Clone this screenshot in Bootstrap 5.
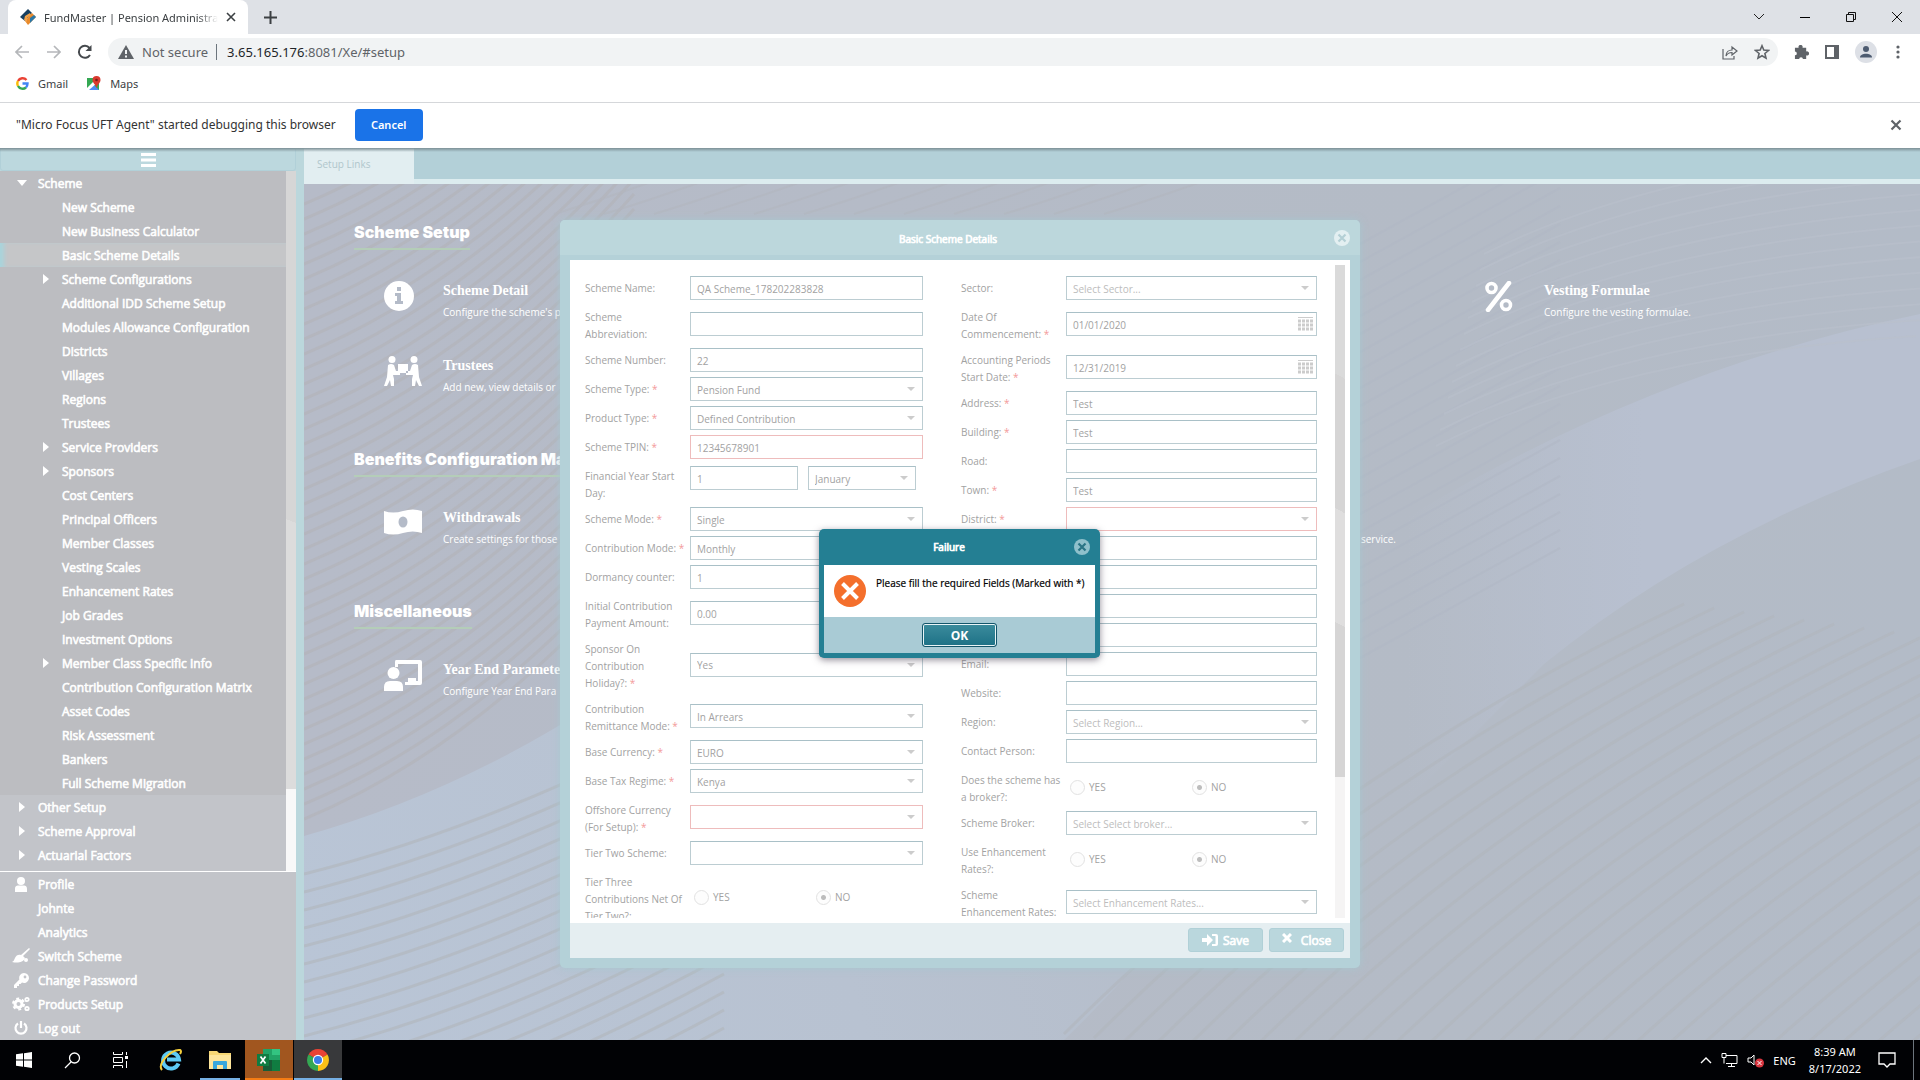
<!DOCTYPE html>
<html lang="en">
<head>
<meta charset="utf-8">
<meta name="viewport" content="width=device-width, initial-scale=1">
<title>FundMaster | Pension Administration</title>
<link href="https://cdn.jsdelivr.net/npm/bootstrap@5.3.0/dist/css/bootstrap.min.css" rel="stylesheet">
<style>
  body { font-family: "Open Sans", "Noto Sans", sans-serif; font-size: 10px; line-height: 17px; }
  button { border: 0; background: none; padding: 0; color: inherit; }
  svg { display: block; flex: none; }
  .chrome-ui { font-family: "Noto Sans", "Open Sans", sans-serif; color: #3c4043; }

  /* browser */
  .tabstrip { height: 34px; background: #dee1e6; padding-left: 8px; }
  .browser-tab { width: 240px; height: 34px; background: #fff; border-radius: 8px 8px 0 0; padding: 0 10px 0 12px; font-size: 11px; gap: 8px; }
  .tab-title { width: 174px; overflow: hidden; white-space: nowrap; -webkit-mask-image: linear-gradient(90deg, #000 88%, transparent); }
  .win-buttons { gap: 30px; padding-right: 17px; }
  .toolbar-row { height: 36px; padding: 4px 13px 4px 15px; }
  .nav-icons { gap: 16px; width: 93px; }
  .address-pill { height: 28px; border-radius: 14px; background: #f1f3f4; font-size: 13px; color: #5f6368; padding: 0 8px 0 10px; }
  .host { margin-left: 10px; }
  .bookmarks { height: 33px; padding: 0 16px 6px; font-size: 11px; border-bottom: 1px solid #d5d7da; gap: 18px; }
  .bookmarks a { color: #3c4043; text-decoration: none; gap: 9px; }
  .infobar { height: 45px; padding: 0 18px 2px 16px; font-size: 12px; color: #333; }
  .cancel-btn { width: 68px; height: 32px; background: #1a73e8; color: #fff; border-radius: 4px; font-weight: 600; font-size: 11px; margin-left: 19px; }

  /* application */
  .app-area { overflow: hidden; background: #bbd7dc; min-height: 0; }
  .app-area::before { content: ""; position: absolute; left: 0; right: 0; top: 0; height: 4px; background: linear-gradient(#7d9096, rgba(150,175,182,0)); z-index: 3; }
  .side { width: 304px; border-right: 8px solid #bbd7dc; color: #fff; }
  .burger { height: 23px; background: #bcd8de; border: 1px solid #b1d0d8; border-radius: 0 0 3px 3px; }
  .tree-wrap { background: #bcbdc1; min-height: 0; border-bottom: 1px solid #fff; }
  .tree-pane { background: #c2c4c9; }
  .tree-pane .group-a { background: #bcbdc1; }
  .tree-scroll { width: 10px; background: linear-gradient(#f8f8f8, #f8f8f8) bottom / 100% 82px no-repeat, linear-gradient(20deg, #dcdcdc 50%, #d6d6d6 50%); }
  .tree-line { height: 24px; font-size: 12px; -webkit-text-stroke: 0.6px #fff; color: #fff; text-decoration: none; white-space: nowrap; display: flex; align-items: center; }
  .tree-line .slot { width: 26px; margin-left: 12px; display: flex; justify-content: center; }
  .sub { padding-left: 24px; }
  .chosen { background: #c5c6c8; box-shadow: inset 6px 0 4px -2px #a9d4dc; }
  .tri-r { border-left: 6px solid #fff; border-top: 5px solid transparent; border-bottom: 5px solid transparent; margin-right: 6px; }
  .tri-d { border-top: 6px solid #fff; border-left: 5px solid transparent; border-right: 5px solid transparent; margin-right: 6px; }
  .side-foot { background: #c2c4c9; }

  .app-tabs { height: 36px; background: #b3d0d8; border-bottom: 5px solid #dcecef; }
  .setup-tab { width: 110px; height: 36px; background: #e2eef1; color: #b0c6cc; font-size: 10px; padding: 0 13px; line-height: 32px; }
  .canvas-bg { background: #b4bbc8; overflow: hidden; min-height: 0; }
  .bg-art { position: absolute; inset: 0; width: 100%; height: 100%; }
  .links-body { position: relative; padding: 36px 98px 0 50px; color: #fff; }
  .sect-title { font-family: Inter, "Open Sans", sans-serif; font-weight: 900; font-size: 16px; line-height: 24px; border-bottom: 2px solid #b4cdb8; display: inline-block; padding-bottom: 4px; margin: 0 0 4px; white-space: nowrap; }
  .link-item { height: 75px; padding: 27px 0 0 30px; white-space: nowrap; }
  .link-item .ico { width: 59px; }
  .link-item h3 { font-family: "Liberation Serif", serif; font-weight: 700; font-size: 14px; line-height: 20px; margin: 0 0 3px; }
  .link-item p { font-size: 10px; line-height: 17px; margin: 0; }
  .link-tail { padding-right: 59px; }
  .sect { margin-bottom: 43px; }

  /* dialogs */
  .layer { position: absolute; inset: 0; display: flex; align-items: center; justify-content: center; z-index: 2; }
  .alert-layer { padding: 0 1px 1px 0; }
  .scheme-win { width: 800px; height: 748px; background: #b4d1d8; border-radius: 5px; box-shadow: 0 0 8px rgba(165,200,208,.9); padding: 0 10px 10px; }
  .win-head { height: 41px; margin: 0 -10px; padding: 0 10px; background: #bcd7dc; border-bottom: 5px solid #b4d1d8; border-radius: 5px 5px 0 0; color: #fff; }
  .win-title { font-size: 10px; font-weight: 400; -webkit-text-stroke: 0.7px #fff; margin: 0; line-height: 17px; }
  .form-area { background: #fff; padding: 5px; min-height: 0; }
  .form-clip { overflow: hidden; padding: 11px 18px 0 10px; gap: 38px; }
  .bar-track { width: 10px; background: #f5f4f4; }
  .bar-thumb { height: 512px; background: linear-gradient(28deg, #d6d5d5 0 30%, #dfdede 30% 52%, #d6d5d5 52% 78%, #dadada 78%); }
  .col-a { width: 338px; } .col-b { width: 356px; }
  .frow { display: flex; align-items: center; margin-bottom: 5px; color: #a2a2a2; }
  .flabel { width: 105px; min-height: 21px; padding-top: 4px; align-self: flex-start; white-space: nowrap; flex: none; }
  .flabel i { color: #f39a9a; font-style: normal; }
  .fin { flex: 1; min-width: 0; height: 24px; border: 1px solid #bccdd2; border-top-color: #a9c0c7; border-radius: 0; background-color: #fff; color: #a2a2a2; padding: 2px 6px 0; font-size: 10px; outline: 0; }
  select.fin { appearance: none; background-image: url("data:image/svg+xml,%3Csvg xmlns='http://www.w3.org/2000/svg' width='8' height='4'%3E%3Cpath d='M0 0h8l-4 4z' fill='%23ccc'/%3E%3C/svg%3E"); background-repeat: no-repeat; background-position: right 7px top 9px; }
  .hint { color: #bdbdbd !important; }
  .bad { border-color: #eebcbc; }
  .cal-wrap { flex: 1; display: flex; position: relative; }
  .cal-wrap svg { position: absolute; right: 4px; top: 5px; }
  .fyear { gap: 10px; flex: 1; padding-right: 7px; align-self: flex-start; padding-top: 2px; }
  .radios label { width: 122px; padding-left: 4px; gap: 4px; display: flex; align-items: center; }
  .radios input { appearance: none; width: 15px; height: 15px; border-radius: 50%; border: 1px solid #e2e2e2; background: #fdfdfd; margin: 0; }
  .radios input:checked { background: radial-gradient(circle, #bdbdbd 2px, #fdfdfd 3px); }
  .win-foot { height: 36px; background: #e5eef1; padding-right: 6px; gap: 6px; }
  .soft-btn { width: 75px; height: 24px; background: #bad7dd; border: 1px solid #b0d0d7; border-radius: 3px; color: #fff; font-size: 12px; -webkit-text-stroke: 0.7px #fff; gap: 5px; display: flex; align-items: center; justify-content: center; }
  .fail-win { width: 281px; border: 5px solid #247f93; border-top: 0; border-radius: 5px; background: #fff; box-shadow: 0 2px 7px rgba(60,50,70,.55); }
  .fail-head { height: 36px; background: #247f93; color: #fff; padding-right: 5px; }
  .fail-text { height: 52px; color: #000; padding: 10px 0 0 10px; gap: 10px; white-space: nowrap; -webkit-text-stroke: 0.2px #000; }
  .fail-foot { height: 36px; background: #a9cbd5; }
  .ok-btn { width: 75px; height: 24px; border: 1px solid #13566b; box-shadow: inset 0 0 0 1px #e9f4f6; border-radius: 3px; background: linear-gradient(#3c8c9d, #1d7186); color: #fff; font-size: 12px; font-weight: 700; }

  /* taskbar */
  .taskbar { height: 40px; background: #010205; color: #fff; }
  .task { width: 48px; height: 40px; display: flex; align-items: center; justify-content: center; }
  .pinned { gap: 1px; margin-left: 3px; }
  .running { background: linear-gradient(#76b0e4, #76b0e4) bottom / 40px 2px no-repeat; }
  .attention { background: #a1561f; box-shadow: inset 0 -2px #f57c14; }
  .current { background: #38393b; box-shadow: inset 0 -2px #76b0e4; }
  .tray { gap: 9px; padding-right: 6px; font-size: 11px; }
  .rule-v { width: 1px; height: 40px; background: #6c757d; }
</style>
</head>
<body class="vh-100 d-flex flex-column overflow-hidden">

<header class="chrome-ui bg-white">
  <div class="tabstrip d-flex align-items-center">
    <div class="browser-tab d-flex align-items-center">
      <svg width="16" height="16" viewBox="0 0 16 16"><path d="M8 0l4 4-7 8-5-4z" fill="#163f5f"/><path d="M12 4l4 4-8 8-3-4z" fill="#e98a2b"/><path d="M5 7l5-3 1 2-4 3v4L4 11z" fill="#f0a24a"/><path d="M10 9l4-3 2 2-6 6z" fill="#2b78a8"/></svg>
      <span class="tab-title">FundMaster | Pension Administra</span>
      <button aria-label="Close tab"><svg width="10" height="10" stroke="#3c4043" stroke-width="1.6"><path d="M1 1l8 8M9 1l-8 8"/></svg></button>
    </div>
    <button class="ms-3" aria-label="New tab"><svg width="13" height="13" stroke="#3c4043" stroke-width="2"><path d="M6.500 0v13M0 6.500h13"/></svg></button>
    <div class="win-buttons d-flex align-items-center ms-auto">
      <button aria-label="Search tabs"><svg width="12" height="8" fill="none" stroke="#222"><path d="M1 1l5 5 5-5"/></svg></button>
      <button aria-label="Minimize" class="ps-1"><svg width="12" height="10"><path d="M1 5h10v1H1z"/></svg></button>
      <button aria-label="Restore" class="ps-1"><svg width="12" height="12" fill="none" stroke="#111"><path d="M1.500 3.500h7v7h-7zM3.500 3.500v-2h7v7h-2"/></svg></button>
      <button aria-label="Close" class="ps-1"><svg width="12" height="12" stroke="#111"><path d="M1 1l10 10M11 1L1 11"/></svg></button>
    </div>
  </div>
  <div class="toolbar-row d-flex align-items-center">
    <div class="nav-icons d-flex align-items-center">
      <svg width="15" height="14" fill="none" stroke="#b5b7ba" stroke-width="1.7"><path d="M14 7H1M7 1L1 7l6 6"/></svg>
      <svg width="15" height="14" fill="none" stroke="#b5b7ba" stroke-width="1.7"><path d="M1 7h13M8 1l6 6-6 6"/></svg>
      <svg width="16" height="16" fill="none" stroke="#45494d" stroke-width="2"><path d="M13 11A6 6 0 1 1 12.500 4"/><path d="M14.500 1v6h-6z" fill="#45494d" stroke="none"/></svg>
    </div>
    <div class="address-pill flex-grow-1 d-flex align-items-center">
      <svg width="16" height="14"><path d="M8 0l8 14H0z" fill="#5f6368"/><path d="M7 5h2v4H7zM7 10.500h2v2H7z" fill="#f1f3f4"/></svg>
      <span class="ms-2">Not secure</span>
      <span class="ms-2 border-start border-secondary py-2"></span>
      <span class="host flex-grow-1"><span class="text-dark">3.65.165.176</span>:8081/Xe/#setup</span>
      <svg width="16" height="15" fill="none" stroke="#5f6368" stroke-width="1.200"><path d="M1 4v10h11v-3M4 11c0-4 3-6 6-6V2l5 4-5 4V7.500C7 7.500 5 9 4 11z"/></svg>
      <svg class="ms-3" width="16" height="16" viewBox="0 0 16 16" fill="none" stroke="#5f6368" stroke-width="1.600"><path d="M8 1.800l1.800 4.300 4.700.4-3.600 3 1.100 4.600L8 11.700l-4 2.400 1.100-4.600-3.600-3 4.700-.4z"/></svg>
    </div>
    <div class="d-flex align-items-center ms-3">
      <svg width="15" height="15" viewBox="0 0 16 16" fill="#5f6368"><path d="M1 3h4a2.200 2.200 0 1 1 4 0h4v4a2.200 2.200 0 1 1 0 4v4H9.500a2 2 0 0 0-4 0H1v-4a2 2 0 0 0 0-4z"/></svg>
      <svg class="ms-3" width="14" height="14"><path d="M1 1h12v12H1z" fill="none" stroke="#5f6368" stroke-width="2"/><path d="M9 0h5v14H9z" fill="#5f6368"/></svg>
      <svg class="ms-3" width="22" height="22"><circle cx="11" cy="11" r="11" fill="#dde0e6"/><circle cx="11" cy="8" r="3" fill="#4d5b70"/><path d="M5 16.500c0-5 12-5 12 0z" fill="#4d5b70"/></svg>
      <svg class="ms-3 me-1" width="10" height="14" fill="#5f6368"><circle cx="5" cy="2" r="1.600"/><circle cx="5" cy="7" r="1.600"/><circle cx="5" cy="12" r="1.600"/></svg>
    </div>
  </div>
  <nav class="bookmarks d-flex align-items-center">
    <a href="#" class="d-flex align-items-center"><svg width="13" height="13" viewBox="0 0 13 13" fill="none" stroke-width="2.400"><path d="M2 4a5.200 5.200 0 0 1 8.500-1" stroke="#ea4335"/><path d="M2 4a5.200 5.200 0 0 0 0 5" stroke="#fbbc05"/><path d="M2 9a5.200 5.200 0 0 0 8 1.500" stroke="#34a853"/><path d="M6.500 6.500h5c0 1.800-.5 3-1.500 4" stroke="#4285f4"/></svg>Gmail</a>
    <a href="#" class="d-flex align-items-center"><svg width="15" height="14"><path d="M1 2h12v12H1z" fill="#34a853"/><path d="M1 14l6-6 6 6z" fill="#4e8cf5"/><path d="M1 12L9 4l2 3-8 7H1z" fill="#fff"/><path d="M10.500 0a4 4 0 0 1 4 4c0 3-3 4-4 8-1-4-4-5-4-8a4 4 0 0 1 4-4z" fill="#d93a2f"/><circle cx="10.500" cy="4" r="1.300" fill="#7a1e18"/></svg>Maps</a>
  </nav>
  <div class="infobar d-flex align-items-center">
    <span>"Micro Focus UFT Agent" started debugging this browser</span>
    <button class="cancel-btn">Cancel</button>
    <button class="ms-auto" aria-label="Dismiss"><svg width="12" height="12" stroke="#5f6368" stroke-width="2.200"><path d="M1.500 1.500l9 9M10.500 1.500l-9 9"/></svg></button>
  </div>
</header>

<div class="app-area position-relative flex-grow-1 d-flex">
  <aside class="side d-flex flex-column flex-shrink-0">
    <button class="burger d-flex justify-content-center align-items-center" aria-label="Toggle menu"><svg width="15" height="14" fill="#fff"><path d="M0 0h15v3H0zM0 5.500h15v3H0zM0 11h15v3H0z"/></svg></button>
    <div class="tree-wrap d-flex flex-grow-1">
      <nav class="tree-pane flex-grow-1">
        <div class="group-a">
          <a href="#" class="tree-line"><span class="slot"><span class="tri-d"></span></span>Scheme</a>
          <div class="sub">
            <a href="#" class="tree-line"><span class="slot"></span>New Scheme</a>
            <a href="#" class="tree-line"><span class="slot"></span>New Business Calculator</a>
          </div>
          <div class="sub chosen"><a href="#" class="tree-line"><span class="slot"></span>Basic Scheme Details</a></div>
          <div class="sub">
            <a href="#" class="tree-line"><span class="slot"><span class="tri-r"></span></span>Scheme Configurations</a>
            <a href="#" class="tree-line"><span class="slot"></span>Additional IDD Scheme Setup</a>
            <a href="#" class="tree-line"><span class="slot"></span>Modules Allowance Configuration</a>
            <a href="#" class="tree-line"><span class="slot"></span>Districts</a>
            <a href="#" class="tree-line"><span class="slot"></span>Villages</a>
            <a href="#" class="tree-line"><span class="slot"></span>Regions</a>
            <a href="#" class="tree-line"><span class="slot"></span>Trustees</a>
            <a href="#" class="tree-line"><span class="slot"><span class="tri-r"></span></span>Service Providers</a>
            <a href="#" class="tree-line"><span class="slot"><span class="tri-r"></span></span>Sponsors</a>
            <a href="#" class="tree-line"><span class="slot"></span>Cost Centers</a>
            <a href="#" class="tree-line"><span class="slot"></span>Principal Officers</a>
            <a href="#" class="tree-line"><span class="slot"></span>Member Classes</a>
            <a href="#" class="tree-line"><span class="slot"></span>Vesting Scales</a>
            <a href="#" class="tree-line"><span class="slot"></span>Enhancement Rates</a>
            <a href="#" class="tree-line"><span class="slot"></span>Job Grades</a>
            <a href="#" class="tree-line"><span class="slot"></span>Investment Options</a>
            <a href="#" class="tree-line"><span class="slot"><span class="tri-r"></span></span>Member Class Specific Info</a>
            <a href="#" class="tree-line"><span class="slot"></span>Contribution Configuration Matrix</a>
            <a href="#" class="tree-line"><span class="slot"></span>Asset Codes</a>
            <a href="#" class="tree-line"><span class="slot"></span>Risk Assessment</a>
            <a href="#" class="tree-line"><span class="slot"></span>Bankers</a>
            <a href="#" class="tree-line"><span class="slot"></span>Full Scheme Migration</a>
          </div>
        </div>
        <a href="#" class="tree-line"><span class="slot"><span class="tri-r"></span></span>Other Setup</a>
        <a href="#" class="tree-line"><span class="slot"><span class="tri-r"></span></span>Scheme Approval</a>
        <a href="#" class="tree-line"><span class="slot"><span class="tri-r"></span></span>Actuarial Factors</a>
      </nav>
      <div class="tree-scroll"></div>
    </div>
    <nav class="side-foot">
      <a href="#" class="tree-line"><span class="slot pe-2"><svg width="14" height="15" fill="#fff"><circle cx="7" cy="4" r="4"/><path d="M1 15v-3c0-4 3-3.500 6-3.500s6-.5 6 3.500v3z"/></svg></span>Profile</a>
      <a href="#" class="tree-line"><span class="slot"></span>Johnte</a>
      <a href="#" class="tree-line"><span class="slot"></span>Analytics</a>
      <a href="#" class="tree-line"><span class="slot pe-2"><svg width="18" height="16" fill="#fff"><path d="M17 0l1 1-7 7 2 2c-2 5-8 5-13 4 2-1 2-2 3-4 1-3 4-4 6-3z"/><circle cx="14" cy="12" r="2"/></svg></span>Switch Scheme</a>
      <a href="#" class="tree-line"><span class="slot pe-2"><svg width="15" height="15"><path d="M10 0a5 5 0 1 1-2 9.600L6.500 11H5v2H3v2H0v-3l5.400-5.500A5 5 0 0 1 10 0z" fill="#fff"/><circle cx="11" cy="4" r="1.400" fill="#c2c4c9"/></svg></span>Change Password</a>
      <a href="#" class="tree-line"><span class="slot pe-2"><svg width="18" height="16" fill="none" stroke="#fff"><circle cx="6.500" cy="8" r="3.500" stroke-width="3"/><circle cx="6.500" cy="8" r="5.500" stroke-width="2" stroke-dasharray="2.900 2.860"/><circle cx="15" cy="3.500" r="1.700" stroke-width="1.800"/><circle cx="15" cy="12.500" r="1.700" stroke-width="1.800"/></svg></span>Products Setup</a>
      <a href="#" class="tree-line"><span class="slot pe-2"><svg width="14" height="14" fill="none" stroke="#fff" stroke-width="2.200"><path d="M4 2.500a5.500 5.500 0 1 0 6 0M7 0v7"/></svg></span>Log out</a>
    </nav>
  </aside>

  <main class="flex-grow-1 d-flex flex-column">
    <div class="app-tabs"><div class="setup-tab">Setup Links</div></div>
    <div class="canvas-bg position-relative flex-grow-1">
      <svg class="bg-art" viewBox="0 0 1616 856" preserveAspectRatio="none" fill="none">
        <defs>
          <linearGradient id="gA" x1="0" y1="0" x2="1" y2="0"><stop offset="0" stop-color="#b6bbc8"/><stop offset=".7" stop-color="#b4bbc6"/><stop offset="1" stop-color="#b3bbc7"/></linearGradient>
          <linearGradient id="gB" gradientUnits="userSpaceOnUse" x1="0" y1="800" x2="1000" y2="500"><stop offset="0" stop-color="#b9c5d6"/><stop offset=".5" stop-color="#b8c2d1"/><stop offset="1" stop-color="#b4bbc7"/></linearGradient>
          <linearGradient id="gC" gradientUnits="userSpaceOnUse" x1="1100" y1="0" x2="1340" y2="0"><stop offset="0" stop-color="#b8c0d0" stop-opacity="0"/><stop offset="1" stop-color="#b8c0d0"/></linearGradient>
        </defs>
        <path d="M0 0h1616v856H0z" fill="url(#gA)"/>
        <path d="M0 652Q150 610 290 520L800 200L1000 560Q900 720 760 856H0z" fill="url(#gB)"/>
        <path d="M1100 335Q1350 185 1616 130V275Q1400 350 1240 480L1100 620z" fill="url(#gC)"/>
        <g id="lines"></g>
      </svg>
      <div class="links-body">
        <section class="sect">
          <h2 class="sect-title">Scheme Setup</h2>
          <div class="row row-cols-4 g-0">
            <div>
              <div class="link-item d-flex"><div class="ico"><svg width="30" height="30"><circle cx="15" cy="15" r="15" fill="#fff"/><path d="M13 6h4v4h-4zM11 12h6v8h2v3h-8v-3h2v-5h-2z" fill="#b4bbc8"/></svg></div><div><h3>Scheme Detail</h3><p>Configure the scheme's p</p></div></div>
              <div class="link-item d-flex"><div class="ico"><svg width="38" height="31" fill="#fff"><circle cx="8" cy="3.500" r="3.500"/><circle cx="30" cy="3.500" r="3.500"/><path d="M14 8h10v9H14zM4 9q3-2 6 0l2 6h4v4H9l1 4v7H7l-1-6-3 6H0l3-9zM34 9q-3-2-6 0l-2 6h-4v4h7l-1 4v7h3l1-6 3 6h3l-3-9z"/></svg></div><div><h3>Trustees</h3><p>Add new, view details or</p></div></div>
            </div>
            <div></div><div></div>
            <div>
              <div class="link-item d-flex"><div class="ico"><svg width="28" height="31" viewBox="0 0 28 31" fill="none" stroke="#fff"><circle cx="6.500" cy="7" r="4.500" stroke-width="3.600"/><circle cx="21" cy="24" r="4.500" stroke-width="3.600"/><path d="M3 29L24 2" stroke-width="4.500" stroke-linecap="round"/></svg></div><div><h3>Vesting Formulae</h3><p>Configure the vesting formulae.</p></div></div>
            </div>
          </div>
        </section>
        <section class="sect">
          <h2 class="sect-title">Benefits Configuration Ma</h2>
          <div class="row row-cols-4 g-0">
            <div><div class="link-item d-flex"><div class="ico"><svg width="38" height="28"><path d="M0 3q9 3 19 0t19 0v22q-9-3-19 0t-19 0z" fill="#fff"/><ellipse cx="19" cy="14" rx="4.500" ry="5.500" fill="#b4bbc8"/></svg></div><div><h3>Withdrawals</h3><p>Create settings for those</p></div></div></div>
            <div></div>
            <div><div class="link-item link-tail d-flex justify-content-end"><div><h3>&nbsp;</h3><p>service.</p></div></div></div>
            <div></div>
          </div>
        </section>
        <section class="sect">
          <h2 class="sect-title">Miscellaneous</h2>
          <div class="link-item d-flex"><div class="ico"><svg width="38" height="31" fill="#fff"><path d="M12 0h24q2 0 2 2v21q0 2-2 2H21v-3h3v-4h8v3h2V4H14v3h-3V2q0-2 1-2z"/><circle cx="9.500" cy="13" r="6"/><path d="M0 31v-4q0-6 6-6h7q6 0 6 6v4z"/></svg></div><div><h3>Year End Paramete</h3><p>Configure Year End Para</p></div></div>
        </section>
      </div>
    </div>
  </main>

  <div class="layer">
    <form class="scheme-win d-flex flex-column" onsubmit="return false">
      <div class="win-head d-flex align-items-center">
        <h2 class="win-title flex-grow-1 text-center pe-2 pt-1">Basic Scheme Details</h2>
        <button type="button" aria-label="Close window"><svg width="16" height="16"><circle cx="8" cy="8" r="8" fill="#e3eff1"/><path d="M4.500 4.500l7 7M11.500 4.500l-7 7" stroke="#b4cfd5" stroke-width="2.200"/></svg></button>
      </div>
      <div class="form-area d-flex flex-grow-1">
        <div class="form-clip flex-grow-1 d-flex">
          <div class="col-a">
            <div class="frow"><label class="flabel" for="a1">Scheme Name:</label><input class="fin" id="a1" value="QA Scheme_178202283828"></div>
            <div class="frow"><label class="flabel" for="a2">Scheme<br>Abbreviation:</label><input class="fin" id="a2"></div>
            <div class="frow"><label class="flabel" for="a3">Scheme Number:</label><input class="fin" id="a3" value="22"></div>
            <div class="frow"><label class="flabel" for="a4">Scheme Type: <i>*</i></label><select class="fin" id="a4"><option>Pension Fund</option></select></div>
            <div class="frow"><label class="flabel" for="a5">Product Type: <i>*</i></label><select class="fin" id="a5"><option>Defined Contribution</option></select></div>
            <div class="frow"><label class="flabel" for="a6">Scheme TPIN: <i>*</i></label><input class="fin bad" id="a6" value="12345678901"></div>
            <div class="frow"><label class="flabel" for="a7">Financial Year Start<br>Day:</label><div class="fyear d-flex"><input class="fin" id="a7" value="1"><select class="fin" aria-label="Month"><option>January</option></select></div></div>
            <div class="frow"><label class="flabel" for="a8">Scheme Mode: <i>*</i></label><select class="fin" id="a8"><option>Single</option></select></div>
            <div class="frow"><label class="flabel" for="a9">Contribution Mode: <i>*</i></label><select class="fin" id="a9"><option>Monthly</option></select></div>
            <div class="frow"><label class="flabel" for="a10">Dormancy counter:</label><input class="fin" id="a10" value="1"></div>
            <div class="frow"><label class="flabel" for="a11">Initial Contribution<br>Payment Amount:</label><input class="fin" id="a11" value="0.00"></div>
            <div class="frow"><label class="flabel" for="a12">Sponsor On<br>Contribution<br>Holiday?: <i>*</i></label><select class="fin" id="a12"><option>Yes</option></select></div>
            <div class="frow"><label class="flabel" for="a13">Contribution<br>Remittance Mode: <i>*</i></label><select class="fin" id="a13"><option>In Arrears</option></select></div>
            <div class="frow"><label class="flabel" for="a14">Base Currency: <i>*</i></label><select class="fin" id="a14"><option>EURO</option></select></div>
            <div class="frow"><label class="flabel" for="a15">Base Tax Regime: <i>*</i></label><select class="fin" id="a15"><option>Kenya</option></select></div>
            <div class="frow"><label class="flabel" for="a16">Offshore Currency<br>(For Setup): <i>*</i></label><select class="fin bad" id="a16"><option></option></select></div>
            <div class="frow"><label class="flabel" for="a17">Tier Two Scheme:</label><select class="fin" id="a17"><option></option></select></div>
            <div class="frow"><span class="flabel">Tier Three<br>Contributions Net Of<br>Tier Two?:</span><div class="radios d-flex"><label><input type="radio" name="r1">YES</label><label><input type="radio" name="r1" checked>NO</label></div></div>
          </div>
          <div class="col-b">
            <div class="frow"><label class="flabel" for="b1">Sector:</label><select class="fin hint" id="b1"><option>Select Sector...</option></select></div>
            <div class="frow"><label class="flabel" for="b2">Date Of<br>Commencement: <i>*</i></label><div class="cal-wrap"><input class="fin" id="b2" value="01/01/2020"><svg width="15" height="14"><path d="M0 .5h15" stroke="#ccc" stroke-width="1"/><path d="M0 4h15M0 8h15M0 12h15" stroke="#ccc" stroke-width="3" stroke-dasharray="3 1"/></svg></div></div>
            <div class="frow"><label class="flabel" for="b3">Accounting Periods<br>Start Date: <i>*</i></label><div class="cal-wrap"><input class="fin" id="b3" value="12/31/2019"><svg width="15" height="14"><path d="M0 .5h15" stroke="#ccc" stroke-width="1"/><path d="M0 4h15M0 8h15M0 12h15" stroke="#ccc" stroke-width="3" stroke-dasharray="3 1"/></svg></div></div>
            <div class="frow"><label class="flabel" for="b4">Address: <i>*</i></label><input class="fin" id="b4" value="Test"></div>
            <div class="frow"><label class="flabel" for="b5">Building: <i>*</i></label><input class="fin" id="b5" value="Test"></div>
            <div class="frow"><label class="flabel" for="b6">Road:</label><input class="fin" id="b6"></div>
            <div class="frow"><label class="flabel" for="b7">Town: <i>*</i></label><input class="fin" id="b7" value="Test"></div>
            <div class="frow"><label class="flabel" for="b8">District: <i>*</i></label><select class="fin bad" id="b8"><option></option></select></div>
            <div class="frow"><span class="flabel"></span><input class="fin" aria-label="Contact line 1"></div>
            <div class="frow"><span class="flabel"></span><input class="fin" aria-label="Contact line 2"></div>
            <div class="frow"><span class="flabel"></span><input class="fin" aria-label="Contact line 3"></div>
            <div class="frow"><span class="flabel"></span><input class="fin" aria-label="Contact line 4"></div>
            <div class="frow"><label class="flabel" for="b9">Email:</label><input class="fin" id="b9"></div>
            <div class="frow"><label class="flabel" for="b10">Website:</label><input class="fin" id="b10"></div>
            <div class="frow"><label class="flabel" for="b11">Region:</label><select class="fin hint" id="b11"><option>Select Region...</option></select></div>
            <div class="frow"><label class="flabel" for="b12">Contact Person:</label><input class="fin" id="b12"></div>
            <div class="frow"><span class="flabel">Does the scheme has<br>a broker?:</span><div class="radios d-flex"><label><input type="radio" name="r2">YES</label><label><input type="radio" name="r2" checked>NO</label></div></div>
            <div class="frow"><label class="flabel" for="b13">Scheme Broker:</label><select class="fin hint" id="b13"><option>Select Select broker...</option></select></div>
            <div class="frow"><span class="flabel">Use Enhancement<br>Rates?:</span><div class="radios d-flex"><label><input type="radio" name="r3">YES</label><label><input type="radio" name="r3" checked>NO</label></div></div>
            <div class="frow"><label class="flabel" for="b14">Scheme<br>Enhancement Rates:</label><select class="fin hint" id="b14"><option>Select Enhancement Rates...</option></select></div>
          </div>
        </div>
        <div class="bar-track"><div class="bar-thumb"></div></div>
      </div>
      <div class="win-foot d-flex align-items-center justify-content-end">
        <button type="button" class="soft-btn"><svg width="16" height="12" fill="#fff"><path d="M0 4h5V0l6 6-6 6V8H0z"/><path d="M10 0h4q2 0 2 2v8q0 2-2 2h-4v-2h3.500V2H10z"/></svg>Save</button>
        <button type="button" class="soft-btn"><svg class="mb-1 me-1" width="10" height="10" stroke="#fff" stroke-width="3"><path d="M1 1l8 8M9 1l-8 8"/></svg>Close</button>
      </div>
    </form>
  </div>

  <div class="layer alert-layer">
    <div class="fail-win" role="alertdialog" aria-labelledby="ft">
      <div class="fail-head d-flex align-items-center">
        <h2 class="win-title flex-grow-1 text-center" id="ft">Failure</h2>
        <button aria-label="Close message"><svg width="16" height="16"><circle cx="8" cy="8" r="8" fill="#8fc0cb"/><path d="M4.500 4.500l7 7M11.500 4.500l-7 7" stroke="#2a7485" stroke-width="2.200"/></svg></button>
      </div>
      <div class="fail-text d-flex">
        <svg width="32" height="32"><circle cx="16" cy="16" r="16" fill="#f46f2c"/><path d="M8.500 8.500l15 15M23.500 8.500l-15 15" stroke="#fff" stroke-width="4"/></svg>
        <span>Please fill the required Fields (Marked with *)</span>
      </div>
      <div class="fail-foot d-flex align-items-center justify-content-center"><button class="ok-btn">OK</button></div>
    </div>
  </div>
</div>

<footer class="taskbar chrome-ui d-flex align-items-center text-white">
  <div class="task"><svg width="16" height="16" fill="#fff"><path d="M0 2.300L7 1.300v6.200H0zM8 1.200L16 0v7.500H8zM0 8.500h7v6.200l-7-1zM8 8.500h8V16l-8-1.200z"/></svg></div>
  <div class="task"><svg width="17" height="17" fill="none" stroke="#fff" stroke-width="1.300"><circle cx="10.500" cy="6" r="5"/><path d="M7 10L1 16"/></svg></div>
  <div class="task"><svg width="17" height="16" fill="none" stroke="#fff"><path d="M1.500 0v2.500h9V0M1.500 5.500h9v5h-9zM1.500 16v-2.500h9V16M14.500 0v3M14.500 9v7"/><path d="M13 4h3v3h-3z" fill="#fff" stroke="none"/></svg></div>
  <div class="pinned d-flex">
    <div class="task"><svg width="24" height="24" fill="none"><path d="M19.500 15.500a8 8 0 1 1 .5-4H8" stroke="#5ecbf5" stroke-width="4"/><path d="M3 22C-2 16 12 1 21 2q2 1 0 4" stroke="#f5cf3c" stroke-width="2"/></svg></div>
    <div class="task running"><svg width="22" height="20"><path d="M0 1h8l2 2h12v16H0z" fill="#f7d774"/><path d="M0 5h22v14H0z" fill="#fde59b"/><path d="M4 19v-7q0-1 1-1h12q1 0 1 1v7h-4v-4H8v4z" fill="#38a7dc"/></svg></div>
    <div class="task attention"><svg width="24" height="22"><path d="M6 0h17v22H6z" fill="#21a366"/><path d="M15 0h8v6h-8z" fill="#33c481"/><path d="M6 11h9v11H6z" fill="#185c37"/><path d="M15 11h8v11h-8z" fill="#107c41"/><path d="M0 5h12v12H0z" fill="#107c41"/><path d="M3.500 7.500l5 7M8.500 7.500l-5 7" stroke="#fff" stroke-width="1.700"/></svg></div>
    <div class="task current"><svg width="22" height="22"><path d="M11 11L1.500 5.500A11 11 0 0 1 20.500 5.500z" fill="#ea4335"/><path d="M11 11L20.500 5.500A11 11 0 0 1 11 22z" fill="#fbc116"/><path d="M11 11v11A11 11 0 0 1 1.500 5.500z" fill="#34a853"/><circle cx="11" cy="11" r="5.200" fill="#fff"/><circle cx="11" cy="11" r="4" fill="#3b7de9"/></svg></div>
  </div>
  <div class="tray d-flex align-items-center ms-auto">
    <svg width="12" height="8" fill="none" stroke="#fff" stroke-width="1.400"><path d="M1 7l5-5 5 5"/></svg>
    <svg width="17" height="14" fill="none" stroke="#fff"><path d="M5 2.500h11v8H5M1 .5h4v4H1zM3 4.500v6M10.500 10.500v3M7 13.500h7"/></svg>
    <svg width="17" height="15"><path d="M1 5h3l3-3v10L4 9H1z" fill="none" stroke="#fff"/><circle cx="12.500" cy="10" r="4.500" fill="#d8353f"/><path d="M10.500 8l4 4M14.500 8l-4 4" stroke="#fff"/></svg>
    <span>ENG</span>
    <span class="text-center ms-1">8:39 AM<br>8/17/2022</span>
    <svg class="ms-2" width="18" height="17" fill="none" stroke="#fff" stroke-width="1.300"><path d="M1 1h16v11h-5l-3 3-3-3H1z"/></svg>
    <span class="rule-v ms-2"></span>
  </div>
</footer>

<script src="https://cdn.jsdelivr.net/npm/bootstrap@5.3.0/dist/js/bootstrap.bundle.min.js"></script>
<script>
  // Families of gently bent strokes that decorate the page background.
  const families = [
    { n: 42, from: [0, 20], step: [0, 15], bend: [170, -70], to: [330, -250], color: "#b2b3b7", w: 3 },
    { n: 24, from: [0, 690], step: [0, 18], bend: [200, -50], to: [420, -170], color: "#b0b6ba", w: 3 },
    { n: 24, from: [1056, 60], step: [0, 18], bend: [90, -50], to: [200, -110], color: "#b0b8c4", w: 2 },
    { n: 13, from: [1180, 70], step: [-4, 16], bend: [180, -90], to: [480, -110], color: "#b9c0cb", w: 2 },
    { n: 40, from: [760, 850], step: [30, 4], bend: [260, -260], to: [620, -430], color: "#b0b6bc", w: 3 },
    { n: 12, from: [250, 30], step: [50, 0], bend: [100, -30], to: [220, -80], color: "#b3b6be", w: 2 }
  ];
  const lines = document.getElementById("lines");
  for (const f of families) {
    for (let i = 0; i < f.n; i++) {
      const x = f.from[0] + f.step[0] * i, y = f.from[1] + f.step[1] * i;
      const p = document.createElementNS("http://www.w3.org/2000/svg", "path");
      p.setAttribute("d", `M${x} ${y}q${f.bend} ${f.to}`);
      p.setAttribute("stroke", f.color);
      p.setAttribute("stroke-width", f.w);
      p.setAttribute("opacity", 0.6);
      lines.appendChild(p);
    }
  }
</script>
</body>
</html>
